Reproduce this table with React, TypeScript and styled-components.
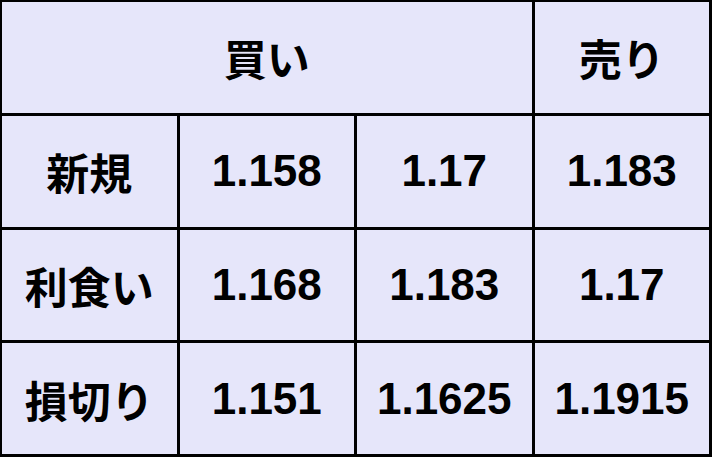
import React from "react";
import styled, { createGlobalStyle } from "styled-components";

const Global = createGlobalStyle`
  html, body { margin: 0; padding: 0; background: #000; }
  * { box-sizing: border-box; }
`;

const Grid = styled.div`
  width: 712px;
  height: 457px;
  display: grid;
  grid-template-columns: repeat(4, 1fr);
  grid-template-rows: repeat(4, 1fr);
  gap: 3px;
  padding: 2px 3px 3px 2px;
  background: #000;
`;

const Cell = styled.div<{ $span?: number }>`
  grid-column: span ${(p) => p.$span ?? 1};
  background: #e6e6fa;
  display: flex;
  align-items: center;
  justify-content: center;
  font-family: "Liberation Sans", Arial, "Noto Sans CJK JP", sans-serif;
  font-weight: 700;
  font-size: 44px;
  color: #000;
  white-space: nowrap;
`;

const Label = styled(Cell)`
  font-family: "Noto Sans CJK JP", "Noto Sans CJK SC", sans-serif;
  font-weight: 700;
  font-size: 43px;
`;

const rows: [string, string, string, string][] = [
  ["新規", "1.158", "1.17", "1.183"],
  ["利食い", "1.168", "1.183", "1.17"],
  ["損切り", "1.151", "1.1625", "1.1915"],
];

export default function App() {
  return (
    <>
      <Global />
      <Grid>
        <Label $span={3}>買い</Label>
        <Label>売り</Label>
        {rows.map((r) => (
          <React.Fragment key={r[0]}>
            <Label>{r[0]}</Label>
            <Cell>{r[1]}</Cell>
            <Cell>{r[2]}</Cell>
            <Cell>{r[3]}</Cell>
          </React.Fragment>
        ))}
      </Grid>
    </>
  );
}
